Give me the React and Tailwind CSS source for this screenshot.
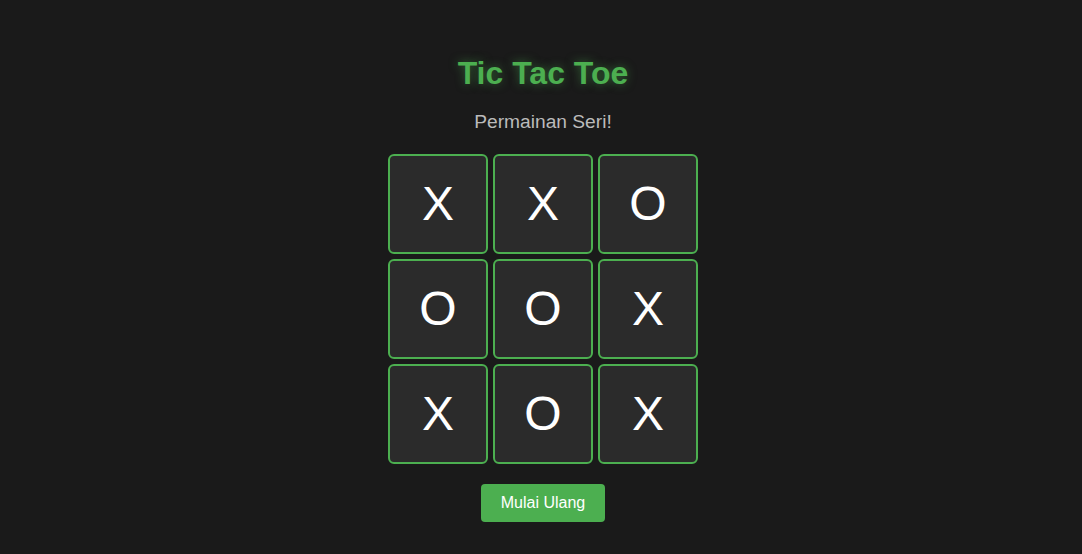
import React from "react";

const board = ["X", "X", "O", "O", "O", "X", "X", "O", "X"];

export default function App() {
  return (
    <div
      className="min-h-[554px] w-full bg-[#1a1a1a] flex flex-col items-center pt-[55px] pl-[4px]"
      style={{ fontFamily: '"Liberation Sans", Arial, sans-serif' }}
    >
      <h1 className="text-[32px] leading-[37px] font-bold text-[#4caf50] [text-shadow:0_0_10px_rgba(76,175,80,0.5)]">
        Tic Tac Toe
      </h1>
      <p className="mt-[19px] text-[19.2px] leading-[22px] text-[#bbbbbb]">Permainan Seri!</p>
      <div className="mt-[21px] grid grid-cols-[repeat(3,100px)] gap-[5px]">
        {board.map((v, i) => (
          <button
            key={i}
            className="w-[100px] h-[100px] bg-[#2b2b2b] border-2 border-[#4caf50] rounded-[6px] text-white text-[48px] leading-none flex items-center justify-center"
          >
            {v}
          </button>
        ))}
      </div>
      <button className="mt-[20px] bg-[#4caf50] text-white text-[16px] leading-[18px] px-[20px] py-[10px] rounded-[4px]">
        Mulai Ulang
      </button>
    </div>
  );
}
